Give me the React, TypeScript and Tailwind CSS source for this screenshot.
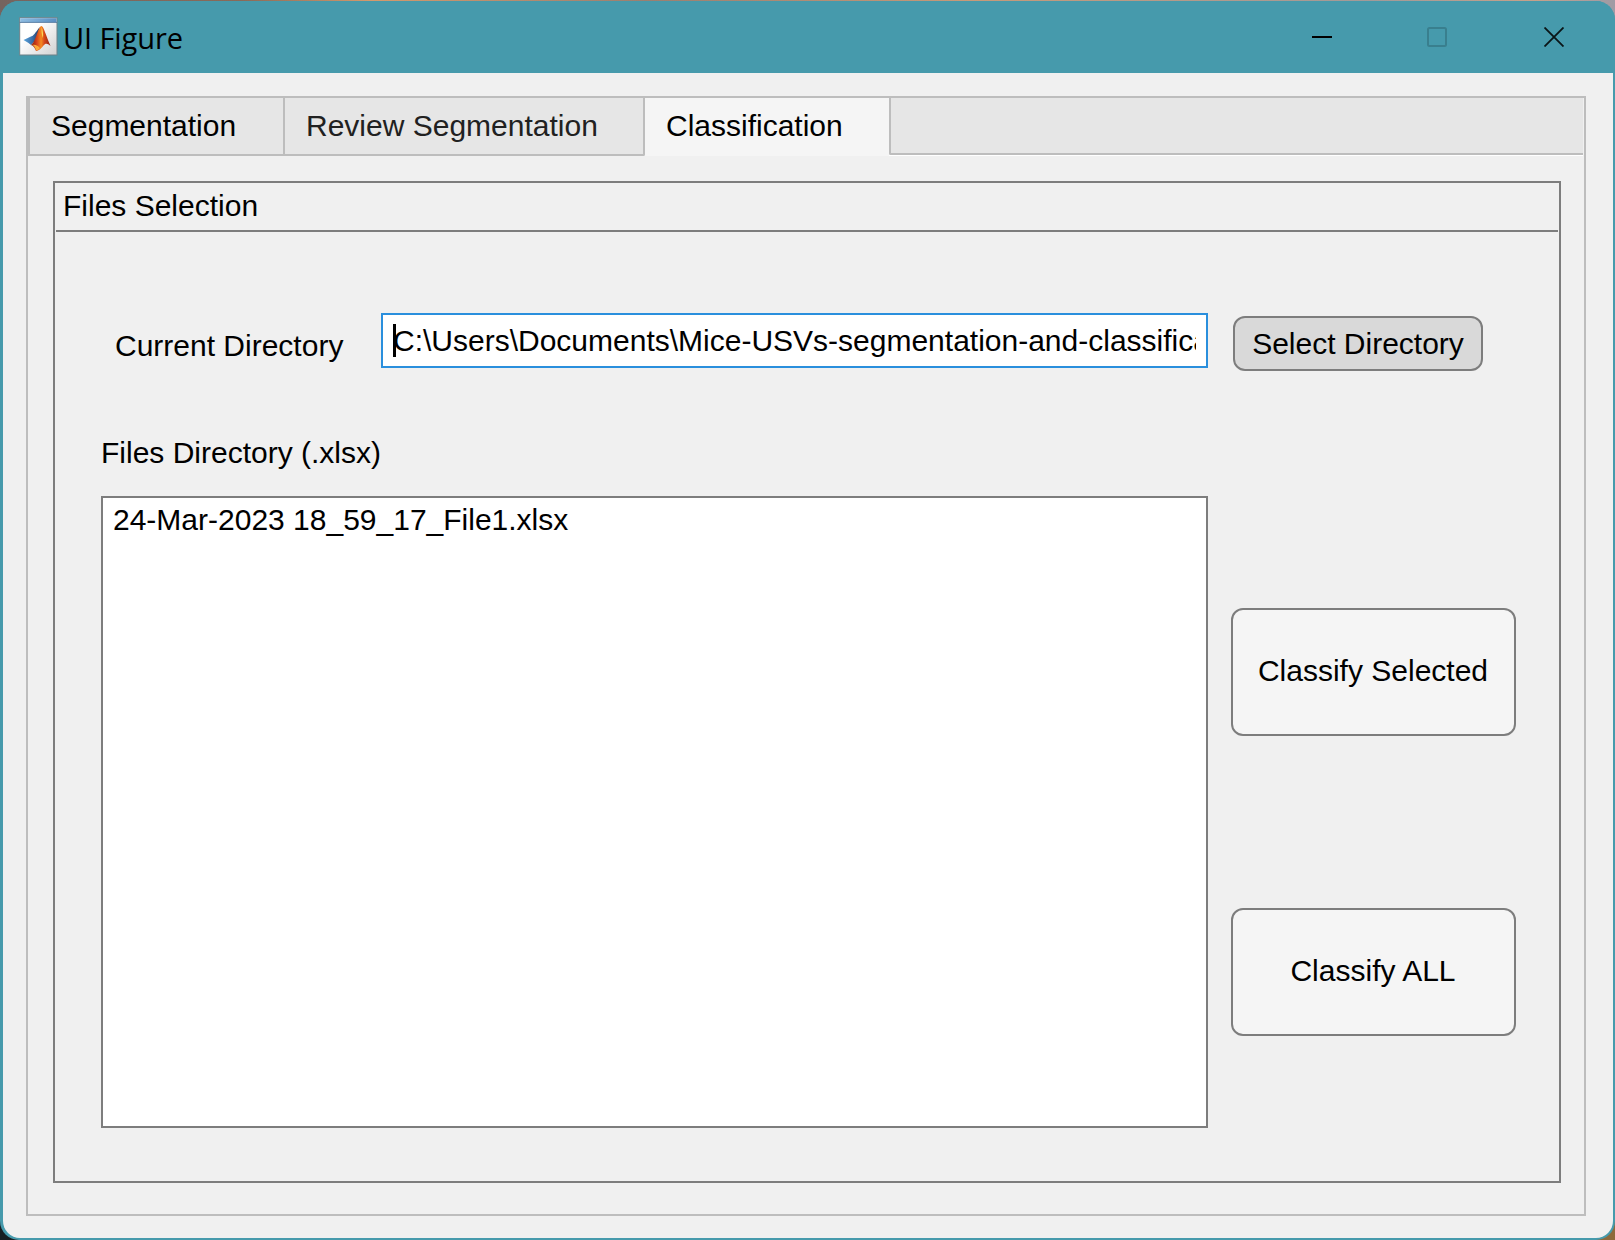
import type { ReactNode } from "react";

function AppIcon() {
  return (
    <svg width="39" height="39" viewBox="0 0 39 39" className="block shrink-0">
      <defs>
        <linearGradient id="bar" x1="0" y1="0" x2="1" y2="0">
          <stop offset="0" stopColor="#8fbde2" />
          <stop offset="1" stopColor="#5a8fc2" />
        </linearGradient>
        <linearGradient id="paper" x1="0" y1="0" x2="1" y2="1">
          <stop offset="0.35" stopColor="#ffffff" />
          <stop offset="1" stopColor="#d0d0d0" />
        </linearGradient>
        <linearGradient id="peak" x1="0" y1="0" x2="1" y2="0">
          <stop offset="0" stopColor="#7c1a10" />
          <stop offset="0.3" stopColor="#d8431a" />
          <stop offset="0.52" stopColor="#f58a22" />
          <stop offset="0.68" stopColor="#d84a1a" />
          <stop offset="1" stopColor="#8e1d12" />
        </linearGradient>
        <linearGradient id="wing" x1="0" y1="0" x2="1" y2="0">
          <stop offset="0" stopColor="#5aa6de" />
          <stop offset="0.55" stopColor="#3a6ea8" />
          <stop offset="1" stopColor="#26395e" />
        </linearGradient>
      </defs>
      <rect x="0.7" y="0.7" width="37.3" height="37.3" fill="url(#paper)" stroke="#6d8088" />
      <rect x="1.2" y="1.2" width="36.3" height="3.8" fill="url(#bar)" />
      <path d="M0.7 5.4H38" stroke="#47719b" strokeWidth="0.9" />
      <path d="M4.5 23L12.5 19.3C15 18.8 18 13 20.8 10L17.5 22L12 28L9.5 26Z" fill="url(#wing)" />
      <path
        d="M22.5 9C24.5 9 26.5 17.5 31.5 29C28.5 26.5 26.7 26 24.5 28.5C22 31.5 19.5 34 17 34C16 31.5 14.5 28.5 12 28C17 25 19 9.5 22.5 9Z"
        fill="url(#peak)"
      />
      <path d="M22.7 10C24 14 24.5 18 23.8 21C22.7 18 22.3 14 22.7 10Z" fill="#fbd85a" />
      <path d="M13 28C15 28 16.3 31 17.2 33.4C18.6 33.3 20 32.3 21 31.2C19.2 28.5 16 27 13 28Z" fill="#f9a93a" />
    </svg>
  );
}

function ActionButton({ children }: { children: ReactNode }) {
  return (
    <button className="flex h-32 w-[285px] items-center justify-center rounded-xl border-2 border-[#7d7d7d] bg-[#f5f5f5] pr-px pb-[2px] whitespace-nowrap">
      {children}
    </button>
  );
}

function TitleBar() {
  return (
    <header className="flex h-[72px] shrink-0 items-start justify-between bg-[#469aac] pr-[51px] pl-[19px]">
      <div className="flex pt-[16px]">
        <AppIcon />
        <h1 className="-mt-px ml-[5px] font-['Open_Sans',sans-serif] text-[29px] leading-[44px] font-normal tracking-[-0.1px]">
          UI Figure
        </h1>
      </div>
      <div className="flex pt-[26px]">
        <svg width="20" height="20" viewBox="0 0 20 20" className="mr-[95px]">
          <path d="M0 10H20" stroke="#000" strokeWidth="2" />
        </svg>
        <svg width="20" height="20" viewBox="0 0 20 20" className="mr-[97px]">
          <rect x="1" y="1" width="18" height="18" rx="1.5" fill="none" stroke="#397f8e" strokeWidth="2" />
        </svg>
        <svg width="20" height="20" viewBox="0 0 20 20">
          <path d="M0.5 0.5L19.5 19.5M19.5 0.5L0.5 19.5" stroke="#0a1517" strokeWidth="1.8" />
        </svg>
      </div>
    </header>
  );
}

function Tabs() {
  return (
    <nav className="flex h-[58px] shrink-0 pr-px leading-[34px] whitespace-nowrap">
      <div className="w-[257px] border-x-2 border-b-2 border-[#bdbdbd] bg-[#e6e6e6] pt-[11px] pl-[21px]">
        Segmentation
      </div>
      <div className="w-[360px] rounded-br-[2px] border-r-2 border-b-2 border-[#bdbdbd] bg-[#e6e6e6] pt-[11px] pl-[21px] text-[#212121]">
        Review Segmentation
      </div>
      <div className="w-[244px] bg-[#f5f5f5] pt-[11px] pl-[21px]">Classification</div>
      <div className="flex-1 border-b border-white">
        <div className="h-full rounded-bl-[2px] border-b-2 border-l-2 border-[#bdbdbd] bg-[#e6e6e6]" />
      </div>
    </nav>
  );
}

export default function App() {
  return (
    <div className="h-[1240px] w-[1615px] overflow-hidden bg-[linear-gradient(90deg,#181f22_0_50%,#8d6a3c_50%)] font-['Liberation_Sans',Arial,sans-serif] text-[30px] leading-[34px] text-black">
      <div className="h-full bg-[linear-gradient(90deg,#75645f_0%,#8a6a58_15%,#d59a6c_23%,#9b7f70_40%,#c89a78_60%,#a39a98_85%,#c7a189_95%,#9f9ba5_100%)] bg-[length:100%_24px] bg-no-repeat pt-px">
        <div className="flex h-[1239px] flex-col overflow-hidden rounded-[19px] bg-[#469aac]">
          <TitleBar />
          <main className="mr-[2px] mb-[2px] ml-[3px] flex flex-1 rounded-b-[17px] bg-[#f0f0f0] pt-[23px] pr-[27px] pb-[22px] pl-[23px]">
            <div className="flex flex-1 flex-col border-2 border-[#bdbdbd]">
              <Tabs />
              <section className="mt-[25px] mr-[23px] mb-[31px] ml-[25px] flex flex-1 flex-col border-2 border-[#7d7d7d]">
                <h2 className="mx-px h-[49px] shrink-0 border-b-2 border-[#7d7d7d] pt-[6px] pl-[7px] font-normal">
                  Files Selection
                </h2>
                <div className="flex pt-[81px]">
                  <label className="mt-[16px] ml-[60px] w-[266px] shrink-0">Current Directory</label>
                  <div className="flex h-[55px] w-[827px] shrink-0 border-2 border-[#2a8fdd] bg-white px-[10px] py-[9px]">
                    <div className="relative flex-1 overflow-hidden whitespace-nowrap">
                      <span className="absolute top-0 left-0 h-[33px] w-[3px] bg-black" />
                      C:\Users\Documents\Mice-USVs-segmentation-and-classification
                    </div>
                  </div>
                  <button className="mt-[3px] ml-[25px] h-[55px] w-[250px] rounded-xl border-2 border-[#7d7d7d] bg-[#d9d9d9] whitespace-nowrap">
                    Select Directory
                  </button>
                </div>
                <div className="flex flex-1 pb-[53px] pl-[46px]">
                  <div className="flex w-[1107px] flex-col">
                    <div className="h-[125px] pt-[65px]">Files Directory (.xlsx)</div>
                    <div className="flex-1 border-2 border-[#7d7d7d] bg-white pt-[5px] pl-[10px]">
                      24-Mar-2023 18_59_17_File1.xlsx
                    </div>
                  </div>
                  <div className="ml-[23px] flex flex-col gap-[172px] pt-[237px]">
                    <ActionButton>Classify Selected</ActionButton>
                    <ActionButton>Classify ALL</ActionButton>
                  </div>
                </div>
              </section>
            </div>
          </main>
        </div>
      </div>
    </div>
  );
}
